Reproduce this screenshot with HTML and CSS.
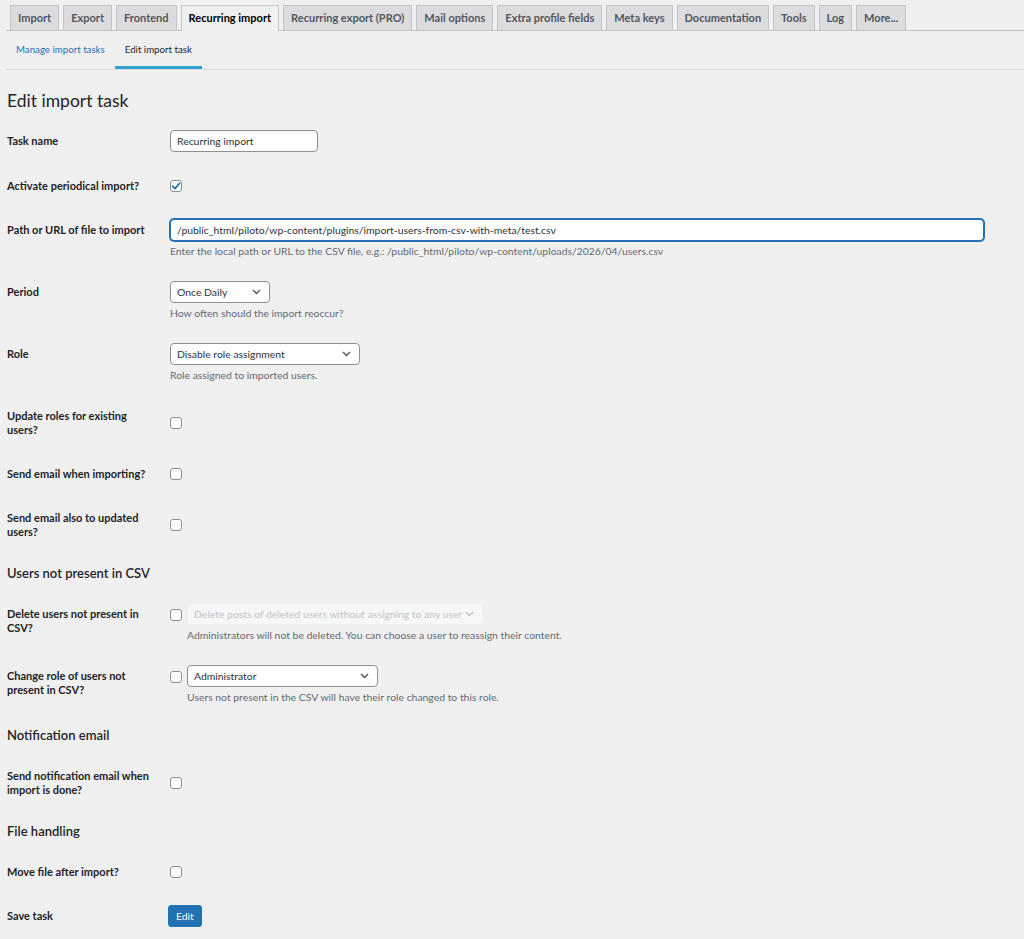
FILE: index.html
```html
<!DOCTYPE html>
<html lang="en">
<head>
    <meta charset="UTF-8">
    <meta name="viewport" content="width=device-width, initial-scale=1.0">
    <title>Edit import task</title>
    <link rel="stylesheet" href="styles.css">
</head>
<body>
    <div class="wrap">
        <nav class="tabs">
            <a class="tab">Import</a>
            <a class="tab">Export</a>
            <a class="tab">Frontend</a>
            <a class="tab active">Recurring import</a>
            <a class="tab">Recurring export (PRO)</a>
            <a class="tab">Mail options</a>
            <a class="tab">Extra profile fields</a>
            <a class="tab">Meta keys</a>
            <a class="tab">Documentation</a>
            <a class="tab">Tools</a>
            <a class="tab">Log</a>
            <a class="tab">More...</a>
        </nav>

        <nav class="subtabs">
            <a class="subtab link">Manage import tasks</a>
            <a class="subtab current">Edit import task</a>
        </nav>

        <h1>Edit import task</h1>

        <div class="form">
            <div class="row">
                <div class="label">Task name</div>
                <div class="field">
                    <input type="text" class="text name" value="Recurring import">
                </div>
            </div>

            <div class="row">
                <div class="label">Activate periodical import?</div>
                <div class="field center">
                    <span class="check checked">
                        <svg width="10" height="10" viewBox="0 0 10 10"><path d="M1.5 5.2 L4 7.6 L8.6 2.2" fill="none" stroke="#2271b1" stroke-width="1.7" stroke-linecap="round" stroke-linejoin="round"/></svg>
                    </span>
                </div>
            </div>

            <div class="row">
                <div class="label">Path or URL of file to import</div>
                <div class="field">
                    <input type="text" class="text path" value="/public_html/piloto/wp-content/plugins/import-users-from-csv-with-meta/test.csv">
                    <p class="desc">Enter the local path or URL to the CSV file, e.g.: /public_html/piloto/wp-content/uploads/2026/04/users.csv</p>
                </div>
            </div>

            <div class="row">
                <div class="label">Period</div>
                <div class="field">
                    <div class="select period">
                        <span>Once Daily</span>
                        <svg width="9" height="6" viewBox="0 0 9 6"><path d="M1 1 L4.5 4.5 L8 1" fill="none" stroke="#50575e" stroke-width="1.4"/></svg>
                    </div>
                    <p class="desc">How often should the import reoccur?</p>
                </div>
            </div>

            <div class="row">
                <div class="label">Role</div>
                <div class="field">
                    <div class="select role">
                        <span>Disable role assignment</span>
                        <svg width="9" height="6" viewBox="0 0 9 6"><path d="M1 1 L4.5 4.5 L8 1" fill="none" stroke="#50575e" stroke-width="1.4"/></svg>
                    </div>
                    <p class="desc">Role assigned to imported users.</p>
                </div>
            </div>

            <div class="row">
                <div class="label">Update roles for existing users?</div>
                <div class="field center"><span class="check"></span></div>
            </div>

            <div class="row">
                <div class="label">Send email when importing?</div>
                <div class="field center"><span class="check"></span></div>
            </div>

            <div class="row">
                <div class="label">Send email also to updated users?</div>
                <div class="field center"><span class="check"></span></div>
            </div>
        </div>

        <h2>Users not present in CSV</h2>

        <div class="form">
            <div class="row">
                <div class="label">Delete users not present in CSV?</div>
                <div class="field inline">
                    <span class="check"></span>
                    <div>
                        <div class="select disabled reassign">
                            <span>Delete posts of deleted users without assigning to any user</span>
                            <svg width="9" height="6" viewBox="0 0 9 6"><path d="M1 1 L4.5 4.5 L8 1" fill="none" stroke="#c3c4c7" stroke-width="1.4"/></svg>
                        </div>
                        <p class="desc">Administrators will not be deleted. You can choose a user to reassign their content.</p>
                    </div>
                </div>
            </div>

            <div class="row">
                <div class="label">Change role of users not present in CSV?</div>
                <div class="field inline">
                    <span class="check"></span>
                    <div>
                        <div class="select admin">
                            <span>Administrator</span>
                            <svg width="9" height="6" viewBox="0 0 9 6"><path d="M1 1 L4.5 4.5 L8 1" fill="none" stroke="#50575e" stroke-width="1.4"/></svg>
                        </div>
                        <p class="desc">Users not present in the CSV will have their role changed to this role.</p>
                    </div>
                </div>
            </div>
        </div>

        <h2>Notification email</h2>

        <div class="form">
            <div class="row">
                <div class="label">Send notification email when import is done?</div>
                <div class="field center"><span class="check"></span></div>
            </div>
        </div>

        <h2>File handling</h2>

        <div class="form">
            <div class="row">
                <div class="label">Move file after import?</div>
                <div class="field center"><span class="check"></span></div>
            </div>

            <div class="row">
                <div class="label">Save task</div>
                <div class="field">
                    <button class="button">Edit</button>
                </div>
            </div>
        </div>
    </div>
</body>
</html>
```

FILE: styles.css
```css
body {
    margin: 0;
    background: #f0f0f1;
    font-family: Lato, "Liberation Sans", sans-serif;
    font-size: 11px;
    color: #1d2327;
}

.wrap {
    padding-left: 6px;
}

/* main tabs */
.tabs {
    display: flex;
    gap: 4px;
    margin-top: 5px;
    padding-left: 4px;
    border-bottom: 1px solid #c3c4c7;
}

.tab {
    height: 24px;
    line-height: 24px;
    padding: 0 7px;
    background: #dcdcde;
    border: 1px solid #c3c4c7;
    border-bottom: none;
    color: #50575e;
    font-weight: 700;
    white-space: nowrap;
}

.tab.active {
    background: #f0f0f1;
    color: #000;
    margin-bottom: -1px;
    padding-bottom: 1px;
}

/* sub navigation */
.subtabs {
    display: flex;
    border-bottom: 1px solid #dcdcde;
}

.subtab {
    padding: 11px 10px 10px;
    line-height: 14px;
    border-bottom: 3px solid transparent;
    font-size: 9.7px;
    color: #1d2327;
}

.subtab.link {
    color: #2271b1;
}

.subtab.current {
    border-bottom-color: #2ea2cc;
}

h1 {
    margin: 19px 0 7px 1px;
    font-size: 17.5px;
    font-weight: 400;
    line-height: 23px;
    color: #1d2327;
}

h2 {
    margin: 11px 0 11px 1px;
    font-size: 13px;
    font-weight: 600;
    line-height: 16px;
    color: #1d2327;
}

/* form rows */
.row {
    display: grid;
    grid-template-columns: 164px 1fr;
}

.label {
    padding: 15px 17px 15px 1px;
    line-height: 14px;
    font-weight: 700;
    color: #1d2327;
}

.field {
    padding: 11px 0 12px;
}

.field.center {
    display: flex;
    align-items: center;
    padding: 0;
}

.field.inline {
    display: flex;
    align-items: flex-start;
    gap: 5px;
}

.field.inline .check {
    margin-top: 6px;
}

.text {
    display: block;
    box-sizing: border-box;
    height: 22px;
    padding: 0 6px;
    border: 1px solid #8c8f94;
    border-radius: 4px;
    background: #fff;
    font-family: inherit;
    font-size: 10.4px;
    color: #2c3338;
    outline: none;
}

.text.name {
    width: 148px;
}

.text.path {
    width: 814px;
    border-color: #2271b1;
    box-shadow: 0 0 0 1px #2271b1;
}

.select {
    display: flex;
    align-items: center;
    justify-content: space-between;
    box-sizing: border-box;
    height: 22px;
    padding: 0 6px;
    border: 1px solid #8c8f94;
    border-radius: 4px;
    background: #fff;
    font-size: 10.4px;
    color: #2c3338;
    white-space: nowrap;
}

.select svg {
    margin-right: 2px;
}

.select.period {
    width: 100px;
}

.select.role {
    width: 190px;
}

.select.admin {
    width: 191px;
}

.select.reassign {
    width: 296px;
}

.select.disabled {
    background: #f6f7f7;
    border-color: #f0f0f1;
    color: #c3c4c7;
}

.desc {
    margin: 4px 0 0;
    line-height: 13px;
    font-size: 10.4px;
    color: #646970;
}

.check {
    display: inline-flex;
    align-items: center;
    justify-content: center;
    box-sizing: border-box;
    width: 12px;
    height: 12px;
    border: 1px solid #8c8f94;
    border-radius: 3px;
    background: #fff;
}

.button {
    height: 22px;
    padding: 0 7px;
    margin-left: -2px;
    border: 1px solid #2271b1;
    border-radius: 3px;
    background: #2271b1;
    color: #fff;
    font-family: inherit;
    font-size: 10.4px;
}
```
